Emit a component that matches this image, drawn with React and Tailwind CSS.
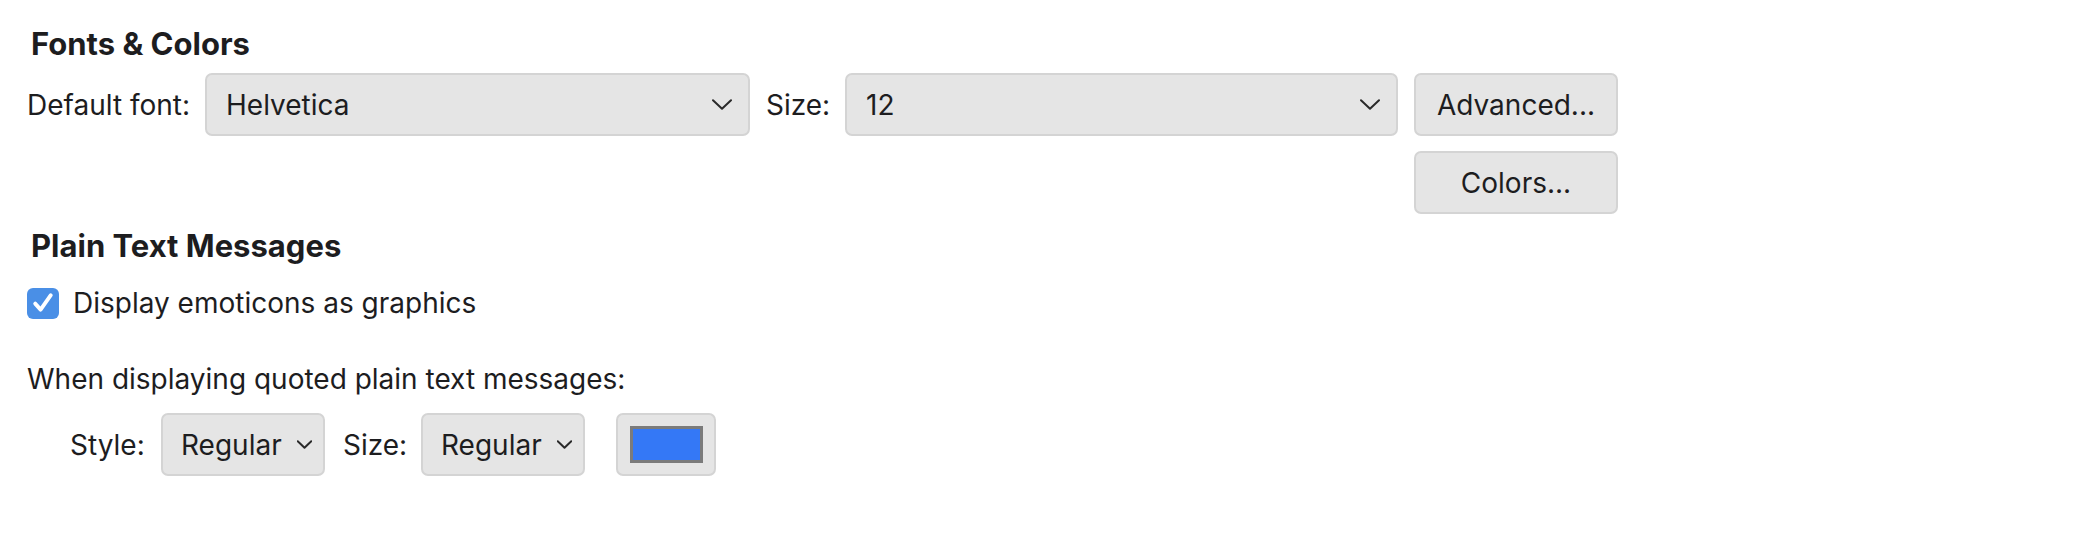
import React from 'react';

const Chevron = ({ className }) => (
    <svg className={className} viewBox="0 0 20 11" fill="none" stroke="#2a2a2a" strokeWidth="2" strokeLinecap="round" strokeLinejoin="round">
        <path d="M1 1.2 L10 9.8 L19 1.2" vectorEffect="non-scaling-stroke" />
    </svg>
);

const PopUp = ({ value, className, small }) => (
    <div className={`flex items-center justify-between h-[63px] bg-[#e5e5e5] border-2 border-[#d4d4d4] rounded-[7px] ${small ? 'pl-[18px] pr-[11px]' : 'pl-[19px] pr-[16px]'} ${className}`}>
        <span>{value}</span>
        <Chevron className={small ? 'w-[15px] h-[9px]' : 'w-[20px] h-[11px]'} />
    </div>
);

const PushButton = ({ label }) => (
    <button className="w-[204px] h-[63px] bg-[#e5e5e5] border-2 border-[#d4d4d4] rounded-[7px] text-center">
        {label}
    </button>
);

const App = () => {
    return (
        <div className="w-[2084px] h-[542px] bg-white text-[#1d1d1f] text-[28px] pl-[27px] pt-[26px]" style={{ fontFamily: 'Inter, "Liberation Sans", sans-serif' }}>
            <h2 className="text-[31px] font-bold leading-[36px] pl-[4px] mb-[11px]">Fonts &amp; Colors</h2>

            <div className="flex items-start">
                <div className="flex items-center h-[63px]">
                    <span className="w-[178px]">Default font:</span>
                    <PopUp value="Helvetica" className="w-[545px]" />
                    <span className="w-[95px] pl-[16px]">Size:</span>
                    <PopUp value="12" className="w-[553px]" />
                </div>
                <div className="ml-[16px] flex flex-col gap-[15px]">
                    <PushButton label="Advanced..." />
                    <PushButton label="Colors..." />
                </div>
            </div>

            <h2 className="text-[31px] font-bold leading-[36px] pl-[4px] mt-[14px]">Plain Text Messages</h2>

            <label className="flex items-center h-[36px] mt-[21px]">
                <span className="w-[32px] h-[31px] rounded-[6px] bg-[#4a8fe6] flex items-center justify-center">
                    <svg viewBox="0 0 20 20" className="w-[24px] h-[24px]" fill="none" stroke="white" strokeWidth="3.2" strokeLinecap="round" strokeLinejoin="round">
                        <path d="M3.5 10.5 L8 15.5 L16.5 3.5" />
                    </svg>
                </span>
                <span className="ml-[14px]">Display emoticons as graphics</span>
            </label>

            <p className="leading-[36px] mt-[40px]">When displaying quoted plain text messages:</p>

            <div className="flex items-center h-[63px] mt-[16px] pl-[43px]">
                <span className="w-[91px]">Style:</span>
                <PopUp value="Regular" className="w-[164px]" small />
                <span className="w-[96px] pl-[18px]">Size:</span>
                <PopUp value="Regular" className="w-[164px]" small />
                <div className="ml-[31px] w-[100px] h-[63px] bg-[#e5e5e5] border-2 border-[#d4d4d4] rounded-[7px] flex items-center justify-center">
                    <div className="w-[73px] h-[37px] bg-[#3478f6] border-[3px] border-[#7b7b7b]"></div>
                </div>
            </div>
        </div>
    );
};

export default App;
